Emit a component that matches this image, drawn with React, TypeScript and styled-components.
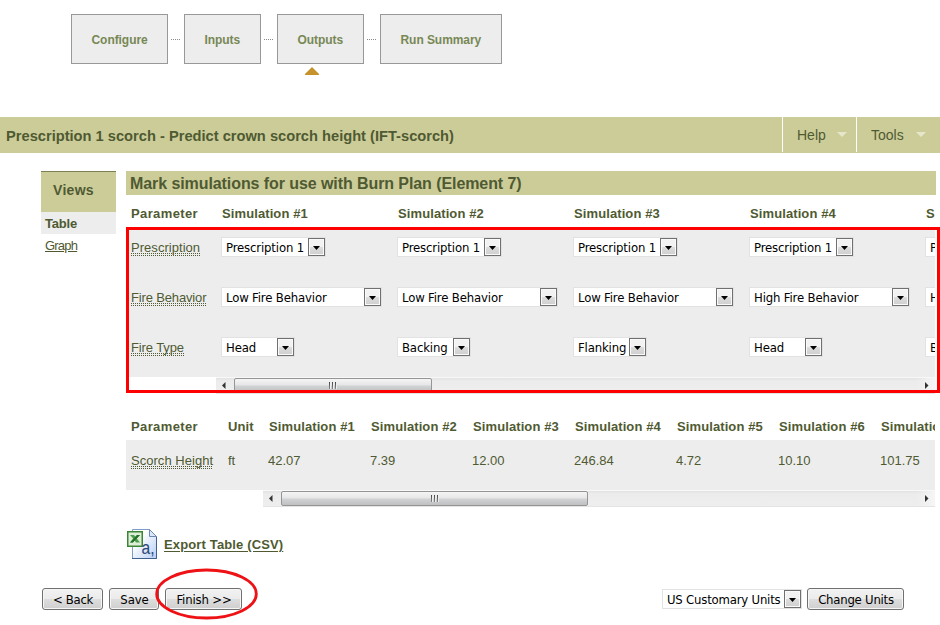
import React from 'react';
import styled, { createGlobalStyle } from 'styled-components';

const olive = '#cccc99';
const ink = '#4f5a32';
const grey = '#ededed';
const ui = '"DejaVu Sans Condensed", "DejaVu Sans", sans-serif';

const GlobalStyle = createGlobalStyle`
  *, *::before, *::after { box-sizing: border-box; }
  body {
    margin: 0;
    background: #fff;
    font-family: "Liberation Sans", Arial, sans-serif;
    font-size: 13px;
    color: ${ink};
    overflow: hidden;
  }
`;

const Page = styled.div`
  width: 940px;
  height: 625px;
  overflow: hidden;
  white-space: nowrap;
`;

/* Wizard steps */
const Steps = styled.nav`
  display: flex;
  align-items: flex-start;
  height: 117px;
  padding: 14px 0 0 71px;
`;
const StepSlot = styled.div`
  display: flex;
  flex-direction: column;
  align-items: flex-start;
`;
const Step = styled.div<{ $width: number }>`
  width: ${p => p.$width}px;
  height: 50px;
  border: 1px solid #989898;
  background: ${grey};
  color: #778855;
  font-size: 12px;
  font-weight: bold;
  letter-spacing: -0.06px;
  line-height: 50px;
  padding-left: 19.5px;
`;
const Link = styled.div`
  width: 9px;
  height: 1px;
  margin: 25px 4px 0 3px;
  background: repeating-linear-gradient(90deg, #8a8a8a 0 1px, transparent 1px 2px);
`;
const StepMarker = styled.svg`
  width: 14px;
  height: 8px;
  margin: 3px 0 0 28px;
`;

/* Title bar */
const TitleBar = styled.header`
  display: flex;
  height: 36px;
  background: ${olive};
`;
const RunTitle = styled.h1`
  flex: 1;
  margin: 0;
  padding-left: 6px;
  font-size: 14.67px;
  line-height: 38px;
  color: ${ink};
`;
const MenuItem = styled.div<{ $width: number; $end: number }>`
  display: flex;
  align-items: center;
  justify-content: space-between;
  width: ${p => p.$width}px;
  height: 35px;
  padding: 0 ${p => p.$end}px 0 14px;
  border-left: 1px solid #fff;
  font-size: 14px;
`;

/* Body columns */
const Columns = styled.div`
  display: flex;
  padding: 18px 0 0 41px;
  gap: 10px;
`;
const Views = styled.aside`
  width: 75px;
`;
const ViewsTitle = styled.div`
  height: 41px;
  padding-left: 12px;
  border-top: 1px solid #7c7f52;
  background: ${olive};
  font-size: 14px;
  font-weight: bold;
  letter-spacing: 0.3px;
  line-height: 37px;
`;
const View = styled.div<{ $active?: boolean }>`
  height: 22px;
  padding-left: 4px;
  line-height: ${p => (p.$active ? 23 : 24)}px;
  background: ${p => (p.$active ? grey : 'transparent')};
  font-weight: ${p => (p.$active ? 'bold' : 'normal')};
  text-decoration: ${p => (p.$active ? 'none' : 'underline')};
  letter-spacing: ${p => (p.$active ? -0.2 : -0.8)}px;
`;
const Main = styled.main`
  width: 810px;
`;
const Heading = styled.h2`
  height: 24px;
  margin: 0;
  padding-left: 4px;
  background: ${olive};
  font-size: 16px;
  letter-spacing: -0.08px;
  line-height: 25px;
`;

/* Scrolling tables with a pinned left part */
const Table = styled.section<{ $top: number }>`
  position: relative;
  display: flex;
  width: 809px;
  padding-top: ${p => p.$top}px;
`;
const Pinned = styled.div<{ $width: number }>`
  width: ${p => p.$width}px;
  flex: none;
`;
const Viewport = styled.div`
  flex: 1;
  min-width: 0;
  overflow: hidden;
`;
const Row = styled.div`
  display: flex;
  width: max-content;
  min-width: 100%;
  height: 50px;
  background: ${grey};
`;
const HeadRow = styled(Row)<{ $height: number; $shift: number }>`
  height: ${p => p.$height}px;
  padding-top: ${p => p.$shift}px;
  background: none;
  font-weight: bold;
  letter-spacing: 0.1px;
  line-height: 16px;
`;
const Cell = styled.div<{ $width: number; $inset: number; $top?: number; $tracking?: number }>`
  width: ${p => p.$width}px;
  flex: none;
  padding-left: ${p => p.$inset}px;
  padding-top: ${p => p.$top ?? 0}px;
  letter-spacing: ${p => (p.$tracking === undefined ? 'inherit' : `${p.$tracking}px`)};
`;
const Term = styled.span<{ $tracking: number }>`
  display: inline-block;
  height: 17px;
  line-height: 17px;
  letter-spacing: ${p => p.$tracking}px;
  background:
    repeating-linear-gradient(90deg, ${ink} 0 1px, transparent 1px 2px) 0 14px / 100% 1px no-repeat,
    repeating-linear-gradient(90deg, ${ink} 0 1px, transparent 1px 2px) 0 16px / 100% 1px no-repeat;
`;
const Callout = styled.div`
  position: absolute;
  left: 0;
  top: 32px;
  width: 814px;
  height: 166px;
  border: 3px solid #ff0000;
`;

/* Drop-down */
const SelectBox = styled.div<{ $width: number; $tracking: number }>`
  display: flex;
  width: ${p => p.$width}px;
  height: 20px;
  padding-left: 4px;
  border: 1px solid #e2e2e2;
  background: #fff;
  color: #000;
  font-family: ${ui};
  font-stretch: condensed;
  font-size: 13px;
  letter-spacing: ${p => p.$tracking}px;
  line-height: 20px;
`;
const SelectText = styled.span`
  flex: 1;
  min-width: 0;
`;
const SelectButton = styled.span`
  display: flex;
  align-items: center;
  justify-content: center;
  width: 17px;
  height: 18px;
  padding-top: 1px;
  border: 1px solid #707070;
  background: linear-gradient(#f2f2f2 0 48%, #dcdcdc 52%, #cfcfcf);
  box-shadow: inset 0 0 0 1px #fafafa;
`;

/* Scroll bar */
const Track = styled.div`
  display: flex;
  height: 17px;
  border-top: 1px solid #f8f8f8;
  border-bottom: 1px solid #e4e4e4;
  background: linear-gradient(#e3e3e3, #ececec 3px, #eee);
`;
const TrackEnd = styled.div<{ $end?: boolean }>`
  display: flex;
  align-items: center;
  width: 18px;
  height: 15px;
  flex: none;
  padding-left: ${p => (p.$end ? 8 : 5)}px;
  background: ${p => (p.$end ? 'linear-gradient(90deg, transparent, #f6f6f6)' : 'none')};
`;
const Thumb = styled.div<{ $width: number }>`
  display: flex;
  align-items: center;
  justify-content: center;
  gap: 1px;
  width: ${p => p.$width}px;
  height: 15px;
  margin-right: auto;
  border: 1px solid #959595;
  border-radius: 2px;
  background: linear-gradient(#f5f5f5, #e6e6e8 48%, #d2d3d5 52%, #bfc0c2);
`;
const Grip = styled.i`
  width: 2px;
  height: 7px;
  border-right: 1px solid #eee;
  background: linear-gradient(#444, #888);
`;

/* Footer */
const Export = styled.div`
  display: flex;
  align-items: center;
  gap: 7px;
  height: 30px;
  margin: 22px 0 29px 127px;
`;
const ExportLink = styled.a`
  font-weight: bold;
  letter-spacing: 0.14px;
  text-decoration: underline;
  text-underline-offset: 2px;
`;
const Actions = styled.footer`
  position: relative;
  display: flex;
  align-items: center;
  height: 22px;
  padding: 0 36px 0 42px;
`;
const Spacer = styled.div`
  flex: 1;
`;
const Button = styled.button<{ $width: number; $gap: number; $tracking: number }>`
  width: ${p => p.$width}px;
  height: 22px;
  margin: 0 ${p => p.$gap}px 0 0;
  padding: 2px 0 0 1px;
  border: 1px solid #707070;
  border-radius: 3px;
  background: linear-gradient(#f2f2f2, #ebebeb 48%, #dddddd 52%, #cfcfcf);
  box-shadow: inset 0 0 0 1px #f6f6f6;
  color: #000;
  font-family: ${ui};
  font-stretch: condensed;
  font-size: 13px;
  letter-spacing: ${p => p.$tracking}px;
  line-height: 18px;
`;
const Ring = styled.svg`
  position: absolute;
  left: 154px;
  top: -21px;
  width: 106px;
  height: 54px;
`;

type SelectProps = { label: string; width: number; tracking?: number };
const Select = ({ label, width, tracking = -0.15 }: SelectProps) => (
  <SelectBox $width={width} $tracking={tracking}>
    <SelectText>{label}</SelectText>
    <SelectButton>
      <svg width="7" height="4" viewBox="0 0 7 4"><path d="M0 0H7L3.5 4Z" fill="#000" /></svg>
    </SelectButton>
  </SelectBox>
);

const ScrollBar = ({ thumb }: { thumb: number }) => (
  <Track>
    <TrackEnd><svg width="5" height="7" viewBox="0 0 5 7"><path d="M4.5 0V7L1 3.5Z" fill="#333" /></svg></TrackEnd>
    <Thumb $width={thumb}><Grip /><Grip /><Grip /></Thumb>
    <TrackEnd $end><svg width="5" height="7" viewBox="0 0 5 7"><path d="M0 0V7L3.5 3.5Z" fill="#333" /></svg></TrackEnd>
  </Track>
);

const MenuArrow = () => (
  <svg width="10" height="5" viewBox="0 0 10 5"><path d="M0 0H10L5 5Z" fill="#e6e6cd" /></svg>
);

const CsvIcon = () => (
  <svg width="30" height="30" viewBox="0 0 30 30">
    <defs>
      <linearGradient id="sheet" x1="0" y1="0" x2="1" y2="1">
        <stop offset="0.3" stopColor="#fff" /><stop offset="1" stopColor="#b4cdf5" />
      </linearGradient>
    </defs>
    <path d="M5.5 .5H22.5L29.5 7.5V29.5H5.5Z" fill="url(#sheet)" stroke="#7f9cc6" />
    <path d="M22.5 .5V7.5H29.5Z" fill="#dbe8fa" stroke="#6c88b3" />
    <path d="M5 29.5H29.5V8" fill="none" stroke="#3f5f8f" />
    <rect x=".75" y="2.75" width="14.5" height="14.5" fill="#dfeed8" stroke="#3a8636" strokeWidth="1.5" />
    <path d="M3 6H7L8.3 7.8L10 6H13L9.8 9.6L13 13.5H9L7.6 11.5L5.8 13.5H3L6.2 9.6Z" fill="#4aa04a" />
    <path d="M10 6H13L6 13.5H3Z" fill="#27702b" />
    <text x="14.5" y="24.5" fontFamily="Liberation Sans, sans-serif" fontSize="18" textLength="13" lengthAdjust="spacingAndGlyphs" fill="#2b4777">a,</text>
  </svg>
);

const steps = [
  { label: 'Configure', width: 97 },
  { label: 'Inputs', width: 77 },
  { label: 'Outputs', width: 87, current: true },
  { label: 'Run Summary', width: 122 },
];
const sims = [1, 2, 3, 4, 5];
const choices = [
  { term: 'Prescription', tracking: 0.04, width: 105, values: Array(5).fill('Prescription 1') as string[] },
  {
    term: 'Fire Behavior', tracking: -0.15, width: 161,
    values: ['Low Fire Behavior', 'Low Fire Behavior', 'Low Fire Behavior', 'High Fire Behavior', 'High Fire Behavior'],
  },
  { term: 'Fire Type', tracking: -0.12, width: 74, values: ['Head', 'Backing', 'Flanking', 'Head', 'Backing'] },
];
const heights = ['42.07', '7.39', '12.00', '246.84', '4.72', '10.10', '101.75'];

export default function App() {
  return (
    <Page>
      <GlobalStyle />
      <Steps>
        {steps.map((s, i) => (
          <React.Fragment key={s.label}>
            {i > 0 && <Link />}
            <StepSlot>
              <Step $width={s.width}>{s.label}</Step>
              {s.current && <StepMarker viewBox="0 0 14 8"><path d="M7 0L14 7V8H0V7Z" fill="#c6922b" /></StepMarker>}
            </StepSlot>
          </React.Fragment>
        ))}
      </Steps>

      <TitleBar>
        <RunTitle>Prescription 1 scorch - Predict crown scorch height (IFT-scorch)</RunTitle>
        <MenuItem $width={74} $end={9}>Help<MenuArrow /></MenuItem>
        <MenuItem $width={84} $end={14}>Tools<MenuArrow /></MenuItem>
      </TitleBar>

      <Columns>
        <Views>
          <ViewsTitle>Views</ViewsTitle>
          <View $active>Table</View>
          <View>Graph</View>
        </Views>
        <Main>
          <Heading>Mark simulations for use with Burn Plan (Element 7)</Heading>
          <Table $top={0}>
            <Pinned $width={90}>
              <HeadRow $height={32} $shift={11}><Cell $width={90} $inset={5} $tracking={0.38}>Parameter</Cell></HeadRow>
              {choices.map(c => (
                <Row key={c.term}>
                  <Cell $width={90} $inset={5} $top={12}><Term $tracking={c.tracking}>{c.term}</Term></Cell>
                </Row>
              ))}
            </Pinned>
            <Viewport>
              <HeadRow $height={32} $shift={11}>
                {sims.map(n => <Cell key={n} $width={176} $inset={6}>Simulation #{n}</Cell>)}
              </HeadRow>
              {choices.map(c => (
                <Row key={c.term}>
                  {c.values.map((v, i) => (
                    <Cell key={i} $width={176} $inset={5} $top={10}><Select label={v} width={c.width} /></Cell>
                  ))}
                </Row>
              ))}
              <ScrollBar thumb={198} />
            </Viewport>
            <Callout />
          </Table>

          <Table $top={19}>
            <Pinned $width={137}>
              <HeadRow $height={27} $shift={6}>
                <Cell $width={96} $inset={5} $tracking={0.38}>Parameter</Cell>
                <Cell $width={41} $inset={6}>Unit</Cell>
              </HeadRow>
              <Row>
                <Cell $width={96} $inset={5} $top={12}><Term $tracking={0.03}>Scorch Height</Term></Cell>
                <Cell $width={41} $inset={6} $top={13}>ft</Cell>
              </Row>
            </Pinned>
            <Viewport>
              <HeadRow $height={27} $shift={6}>
                {heights.map((_, i) => <Cell key={i} $width={102} $inset={6}>Simulation #{i + 1}</Cell>)}
              </HeadRow>
              <Row>
                {heights.map(h => <Cell key={h} $width={102} $inset={5} $top={13}>{h}</Cell>)}
              </Row>
              <ScrollBar thumb={307} />
            </Viewport>
          </Table>
        </Main>
      </Columns>

      <Export>
        <CsvIcon />
        <ExportLink>Export Table (CSV)</ExportLink>
      </Export>

      <Actions>
        <Button $width={61} $gap={6} $tracking={-0.3}>&lt; Back</Button>
        <Button $width={50} $gap={6} $tracking={-0.1}>Save</Button>
        <Button $width={77} $gap={0} $tracking={-0.15}>Finish &gt;&gt;</Button>
        <Spacer />
        <Select label="US Customary Units" width={140} tracking={-0.2} />
        <Pinned $width={5} />
        <Button $width={97} $gap={0} $tracking={-0.23}>Change Units</Button>
        <Ring viewBox="0 0 106 54">
          <ellipse cx="52.5" cy="27" rx="49.8" ry="24" fill="none" stroke="#ee1115" strokeWidth="2.8" />
        </Ring>
      </Actions>
    </Page>
  );
}
